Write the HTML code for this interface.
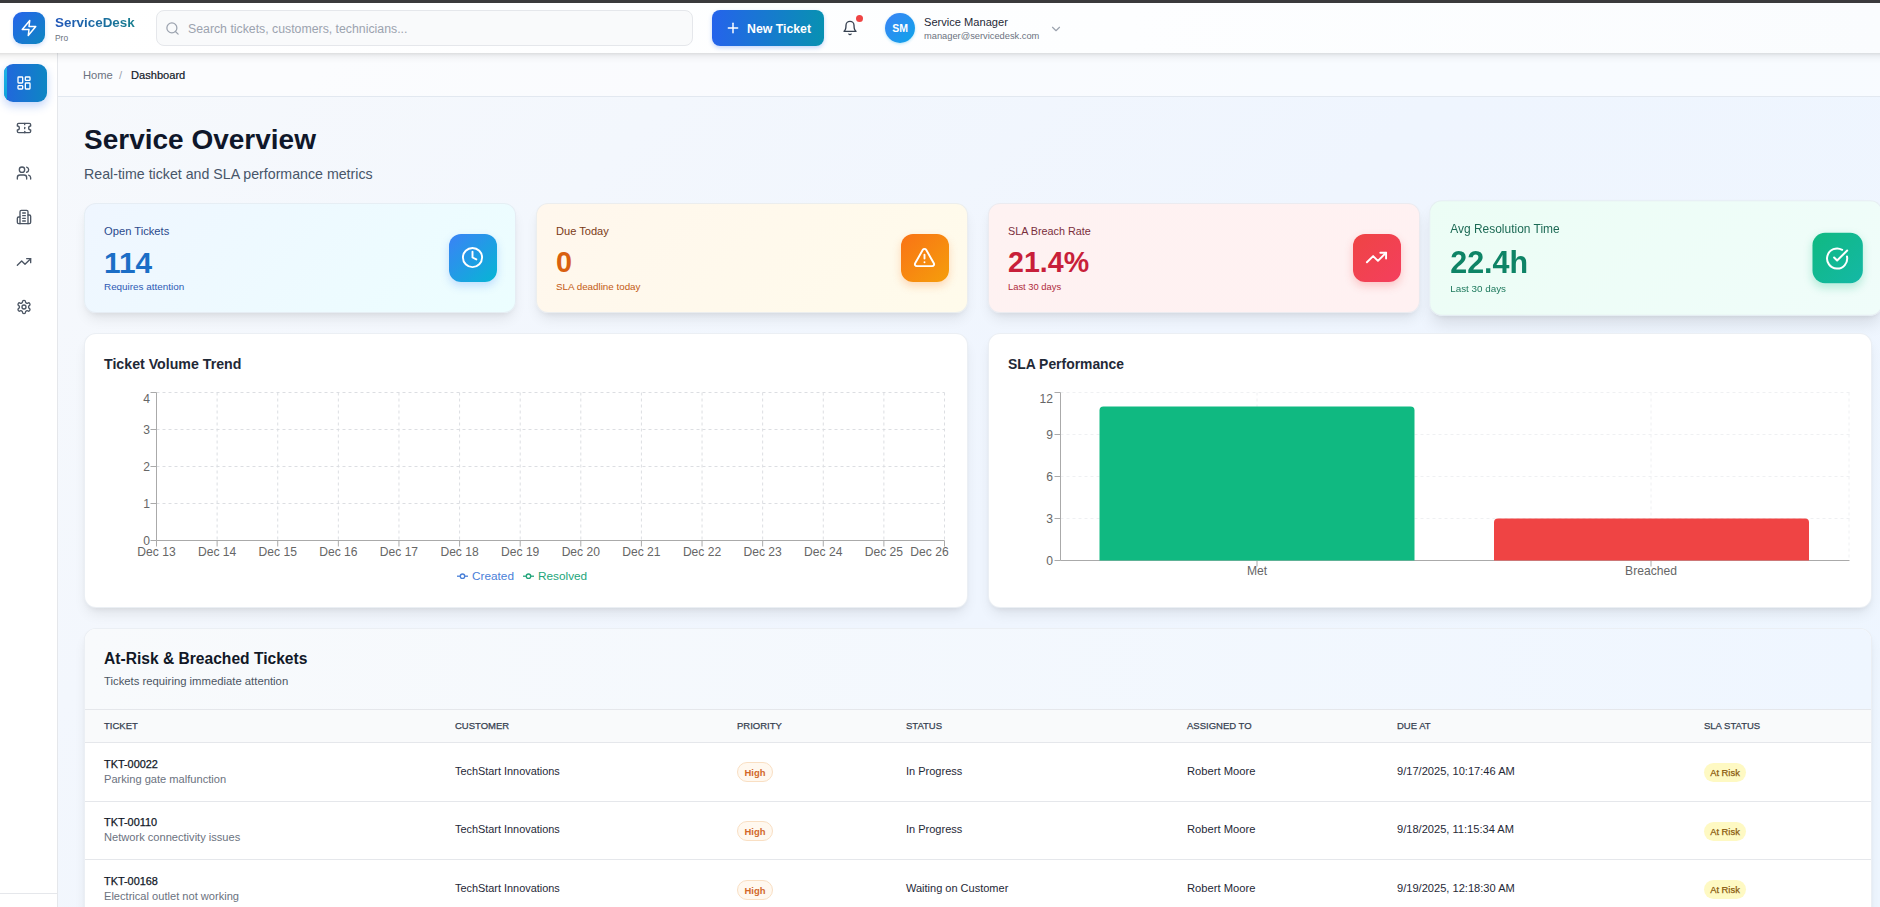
<!DOCTYPE html>
<html><head><meta charset="utf-8">
<style>
*{box-sizing:border-box;margin:0;padding:0}
html,body{width:1880px;height:907px;overflow:hidden}
body{font-family:"Liberation Sans",sans-serif;position:relative;background:linear-gradient(135deg,#f7f9fc 0%,#eff5fe 55%,#eef6ff 100%);color:#1f2937}
.abs{position:absolute}
.t{position:absolute;white-space:nowrap;line-height:1}
svg{display:block}
#topbar{left:0;top:0;width:1880px;height:3px;background:#3a3a3c;z-index:10}
#header{left:0;top:3px;width:1880px;height:50px;background:linear-gradient(90deg,#ffffff 0%,#fdfeff 60%,#fafcfe 100%);z-index:5}
#sidebar{left:0;top:53px;width:58px;height:854px;background:#fff;border-right:1px solid #e5e7eb;z-index:3}
#crumb{left:58px;top:53px;width:1822px;height:44px;background:rgba(255,255,255,.55);border-bottom:1px solid #e2e8f0}
.card{position:absolute;border-radius:12px;box-shadow:0 8px 14px -3px rgba(0,0,0,.09),0 3px 6px -3px rgba(0,0,0,.08);border:1px solid rgba(226,232,240,.7)}
.ibox{position:absolute;width:48px;height:48px;border-radius:12px;display:flex;align-items:center;justify-content:center}
</style></head>
<body>
<div id="topbar" class="abs"></div>
<div class="abs" style="left:-20px;top:3px;width:1920px;height:50px;box-shadow:0 3px 8px rgba(0,0,0,.09),0 1px 3px rgba(0,0,0,.08);z-index:4;background:#fff"></div>
<div id="header" class="abs">
  <div class="abs" style="left:13px;top:9px;width:32px;height:32px;border-radius:9px;background:linear-gradient(135deg,#2563eb,#0e87c0);box-shadow:0 2px 4px rgba(37,99,235,.2);display:flex;align-items:center;justify-content:center">
    <svg width="18" height="18" viewBox="0 0 24 24" fill="none" stroke="#fff" stroke-width="2" stroke-linecap="round" stroke-linejoin="round"><polygon points="13 2 3 14 12 14 11 22 21 10 12 10 13 2"/></svg>
  </div>
  <div class="t" style="left:55px;top:13px;font-size:13.4px;font-weight:700;background:linear-gradient(90deg,#1f55b8,#167d8e);-webkit-background-clip:text;background-clip:text;color:transparent">ServiceDesk</div>
  <div class="t" style="left:55px;top:31px;font-size:8.4px;color:#6b7280">Pro</div>
  <div class="abs" style="left:156px;top:7px;width:537px;height:36px;border:1px solid #e5e7eb;border-radius:8px;background:#f9fafb"></div>
  <svg class="abs" style="left:165px;top:18px" width="15" height="15" viewBox="0 0 24 24" fill="none" stroke="#9ca3af" stroke-width="2" stroke-linecap="round" stroke-linejoin="round"><circle cx="11" cy="11" r="8"/><path d="m21 21-4.3-4.3"/></svg>
  <div class="t" style="left:188px;top:20px;font-size:12.3px;color:#9ca3af">Search tickets, customers, technicians...</div>
  <div class="abs" style="left:712px;top:7px;width:112px;height:36px;border-radius:8px;background:linear-gradient(90deg,#2563eb,#0891b2);box-shadow:0 2px 4px rgba(37,99,235,.25)"></div>
  <svg class="abs" style="left:725px;top:17px" width="16" height="16" viewBox="0 0 24 24" fill="none" stroke="#fff" stroke-width="2.2" stroke-linecap="round"><path d="M5 12h14"/><path d="M12 5v14"/></svg>
  <div class="t" style="left:747px;top:20px;font-size:12.3px;font-weight:700;color:#fff">New Ticket</div>
  <svg class="abs" style="left:841.7px;top:17px" width="16" height="16" viewBox="0 0 24 24" fill="none" stroke="#374151" stroke-width="2" stroke-linecap="round" stroke-linejoin="round"><path d="M6 8a6 6 0 0 1 12 0c0 7 3 9 3 9H3s3-2 3-9"/><path d="M10.3 21a1.94 1.94 0 0 0 3.4 0"/></svg>
  <div class="abs" style="left:856px;top:12px;width:7px;height:7px;border-radius:50%;background:#ef4444"></div>
  <div class="abs" style="left:885px;top:10px;width:30px;height:30px;border-radius:50%;background:linear-gradient(135deg,#3b82f6,#0ea5e9);box-shadow:0 1px 3px rgba(14,165,233,.3);display:flex;align-items:center;justify-content:center;color:#fff;font-weight:700;font-size:10.5px">SM</div>
  <div class="t" style="left:924px;top:14px;font-size:11.1px;color:#1f2937">Service Manager</div>
  <div class="t" style="left:924px;top:29px;font-size:9.3px;color:#6b7280">manager@servicedesk.com</div>
  <svg class="abs" style="left:1049px;top:19px" width="14" height="14" viewBox="0 0 24 24" fill="none" stroke="#9ca3af" stroke-width="2" stroke-linecap="round" stroke-linejoin="round"><path d="m6 9 6 6 6-6"/></svg>
</div>

<div id="sidebar" class="abs">
  <div class="abs" style="left:0;top:840px;width:57px;height:1px;background:#e5e7eb"></div>
  <div class="abs" style="left:4px;top:11px;width:43px;height:38px;border-radius:9px;background:linear-gradient(90deg,#2266dd,#0d86c4);box-shadow:0 4px 10px rgba(37,99,235,.28);overflow:hidden">
    <div class="abs" style="left:0;top:0;width:3px;height:38px;background:linear-gradient(180deg,#22b5e8,#0aa0d8)"></div>
  </div>
  <svg class="abs" style="left:16px;top:22px" width="16" height="16" viewBox="0 0 24 24" fill="none" stroke="#fff" stroke-width="2" stroke-linecap="round" stroke-linejoin="round"><rect width="7" height="9" x="3" y="3" rx="1"/><rect width="7" height="5" x="14" y="3" rx="1"/><rect width="7" height="9" x="14" y="12" rx="1"/><rect width="7" height="5" x="3" y="16" rx="1"/></svg>
  <svg class="abs" style="left:16px;top:67.3px" width="16" height="16" viewBox="0 0 24 24" fill="none" stroke="#4b5563" stroke-width="2" stroke-linecap="round" stroke-linejoin="round"><path d="M2 9a3 3 0 0 1 0 6v2a2 2 0 0 0 2 2h16a2 2 0 0 0 2-2v-2a3 3 0 0 1 0-6V7a2 2 0 0 0-2-2H4a2 2 0 0 0-2 2Z"/><path d="M13 5v2"/><path d="M13 17v2"/><path d="M13 11v2"/></svg>
  <svg class="abs" style="left:16px;top:112.4px" width="16" height="16" viewBox="0 0 24 24" fill="none" stroke="#4b5563" stroke-width="2" stroke-linecap="round" stroke-linejoin="round"><path d="M16 21v-2a4 4 0 0 0-4-4H6a4 4 0 0 0-4 4v2"/><circle cx="9" cy="7" r="4"/><path d="M22 21v-2a4 4 0 0 0-3-3.87"/><path d="M16 3.13a4 4 0 0 1 0 7.75"/></svg>
  <svg class="abs" style="left:16px;top:155.6px" width="16" height="16" viewBox="0 0 24 24" fill="none" stroke="#4b5563" stroke-width="2" stroke-linecap="round" stroke-linejoin="round"><path d="M6 22V4a2 2 0 0 1 2-2h8a2 2 0 0 1 2 2v18Z"/><path d="M6 12H4a2 2 0 0 0-2 2v6a2 2 0 0 0 2 2h2"/><path d="M18 9h2a2 2 0 0 1 2 2v9a2 2 0 0 1-2 2h-2"/><path d="M10 6h4"/><path d="M10 10h4"/><path d="M10 14h4"/><path d="M10 18h4"/></svg>
  <svg class="abs" style="left:16px;top:201px" width="16" height="16" viewBox="0 0 24 24" fill="none" stroke="#4b5563" stroke-width="2" stroke-linecap="round" stroke-linejoin="round"><polyline points="22 7 13.5 15.5 8.5 10.5 2 17"/><polyline points="16 7 22 7 22 13"/></svg>
  <svg class="abs" style="left:16px;top:245.8px" width="16" height="16" viewBox="0 0 24 24" fill="none" stroke="#4b5563" stroke-width="2" stroke-linecap="round" stroke-linejoin="round"><path d="M12.22 2h-.44a2 2 0 0 0-2 2v.18a2 2 0 0 1-1 1.73l-.43.25a2 2 0 0 1-2 0l-.15-.08a2 2 0 0 0-2.73.73l-.22.38a2 2 0 0 0 .73 2.73l.15.1a2 2 0 0 1 1 1.72v.51a2 2 0 0 1-1 1.74l-.15.09a2 2 0 0 0-.73 2.73l.22.38a2 2 0 0 0 2.73.73l.15-.08a2 2 0 0 1 2 0l.43.25a2 2 0 0 1 1 1.73V20a2 2 0 0 0 2 2h.44a2 2 0 0 0 2-2v-.18a2 2 0 0 1 1-1.73l.43-.25a2 2 0 0 1 2 0l.15.08a2 2 0 0 0 2.73-.73l.22-.39a2 2 0 0 0-.73-2.73l-.15-.08a2 2 0 0 1-1-1.74v-.5a2 2 0 0 1 1-1.74l.15-.09a2 2 0 0 0 .73-2.73l-.22-.38a2 2 0 0 0-2.73-.73l-.15.08a2 2 0 0 1-2 0l-.43-.25a2 2 0 0 1-1-1.73V4a2 2 0 0 0-2-2z"/><circle cx="12" cy="12" r="3"/></svg>
</div>
<div id="crumb" class="abs">
  <div class="t" style="left:25px;top:16.8px;font-size:11.2px;color:#6b7280">Home</div>
  <div class="t" style="left:61px;top:16.8px;font-size:11.2px;color:#9ca3af">/</div>
  <div class="t" style="left:73px;top:16.8px;font-size:11.1px;color:#111827;-webkit-text-stroke:.2px #111827">Dashboard</div>
</div>

<div class="t" style="left:84px;top:126px;font-size:28px;font-weight:700;color:#0f172a">Service Overview</div>
<div class="t" style="left:84px;top:167px;font-size:14.2px;color:#475569">Real-time ticket and SLA performance metrics</div>


<!-- stat cards -->
<div class="card" style="left:84px;top:202.5px;width:432px;height:110px;background:linear-gradient(135deg,#eff6ff,#ecfeff)">
  <div class="t" style="left:19px;top:22px;font-size:11.2px;color:#2b4a8c">Open Tickets</div>
  <div class="t" style="left:19px;top:44px;font-size:29.8px;font-weight:700;color:#1b6ec6">114</div>
  <div class="t" style="left:19px;top:78px;font-size:9.9px;color:#2d5ab4">Requires attention</div>
  <div class="ibox" style="left:363.5px;top:30px;background:linear-gradient(135deg,#3b82f6,#06b6d4);box-shadow:0 4px 8px rgba(59,130,246,.25)">
    <svg width="23" height="23" viewBox="0 0 24 24" fill="none" stroke="#fff" stroke-width="2" stroke-linecap="round" stroke-linejoin="round"><circle cx="12" cy="12" r="10"/><polyline points="12 6 12 12 16 14"/></svg>
  </div>
</div>
<div class="card" style="left:536px;top:202.5px;width:432px;height:110px;background:linear-gradient(135deg,#fff7ed,#fffbeb)">
  <div class="t" style="left:19px;top:22px;font-size:11.1px;color:#7a3a16">Due Today</div>
  <div class="t" style="left:19px;top:44px;font-size:28.8px;font-weight:700;color:#d9600f">0</div>
  <div class="t" style="left:19px;top:78px;font-size:9.8px;color:#c35a14">SLA deadline today</div>
  <div class="ibox" style="left:363.5px;top:30px;background:linear-gradient(135deg,#f97316,#f59e0b);box-shadow:0 4px 8px rgba(249,115,22,.25)">
    <svg width="23" height="23" viewBox="0 0 24 24" fill="none" stroke="#fff" stroke-width="2" stroke-linecap="round" stroke-linejoin="round"><path d="m21.73 18-8-14a2 2 0 0 0-3.48 0l-8 14A2 2 0 0 0 4 21h16a2 2 0 0 0 1.73-3"/><path d="M12 9v4"/><path d="M12 17h.01"/></svg>
  </div>
</div>
<div class="card" style="left:988px;top:202.5px;width:432px;height:110px;background:linear-gradient(135deg,#fef2f2,#fff1f2)">
  <div class="t" style="left:19px;top:22px;font-size:10.8px;color:#7a2e3c">SLA Breach Rate</div>
  <div class="t" style="left:19px;top:44px;font-size:28.6px;font-weight:700;color:#c81f3a">21.4%</div>
  <div class="t" style="left:19px;top:78px;font-size:9.4px;color:#b02a3c">Last 30 days</div>
  <div class="ibox" style="left:363.5px;top:30px;background:linear-gradient(135deg,#ef4444,#f43f5e);box-shadow:0 4px 8px rgba(239,68,68,.25)">
    <svg width="23" height="23" viewBox="0 0 24 24" fill="none" stroke="#fff" stroke-width="2" stroke-linecap="round" stroke-linejoin="round"><polyline points="22 7 13.5 15.5 8.5 10.5 2 17"/><polyline points="16 7 22 7 22 13"/></svg>
  </div>
</div>
<div class="card" style="left:1440px;top:202.5px;width:432px;height:110px;background:linear-gradient(135deg,#ecfdf5,#f0fdfa);transform:scale(1.05);box-shadow:0 10px 15px -3px rgba(0,0,0,.1),0 4px 6px -4px rgba(0,0,0,.1)">
  <div class="t" style="left:19px;top:21px;font-size:11.4px;color:#1d6a55">Avg Resolution Time</div>
  <div class="t" style="left:19px;top:44px;font-size:29px;font-weight:700;color:#0e8466">22.4h</div>
  <div class="t" style="left:19px;top:78px;font-size:9.4px;color:#1f7a5e">Last 30 days</div>
  <div class="ibox" style="left:363.5px;top:30px;background:linear-gradient(135deg,#10b981,#14b8a6);box-shadow:0 4px 8px rgba(16,185,129,.25)">
    <svg width="23" height="23" viewBox="0 0 24 24" fill="none" stroke="#fff" stroke-width="2" stroke-linecap="round" stroke-linejoin="round"><path d="M21.801 10A10 10 0 1 1 17 3.335"/><path d="m9 11 3 3L22 4"/></svg>
  </div>
</div>



<!-- chart cards -->
<div class="card" style="left:84px;top:332.5px;width:884px;height:275px;background:#fff"></div>
<div class="card" style="left:988px;top:332.5px;width:884px;height:275px;background:#fff"></div>
<div class="t" style="left:104px;top:357px;font-size:14.2px;font-weight:700;color:#1f2937">Ticket Volume Trend</div>
<div class="t" style="left:1008px;top:357.5px;font-size:13.9px;font-weight:700;color:#1f2937">SLA Performance</div>

<svg class="abs" style="left:0;top:0" width="1880" height="907" font-family="Liberation Sans" >
<g stroke="#dcdee2" stroke-dasharray="3 3" stroke-width="1"><line x1="156.5" y1="392.5" x2="944.5" y2="392.5"/><line x1="156.5" y1="429.5" x2="944.5" y2="429.5"/><line x1="156.5" y1="466.5" x2="944.5" y2="466.5"/><line x1="156.5" y1="503.5" x2="944.5" y2="503.5"/><line x1="217.12" y1="392.5" x2="217.12" y2="540.5"/><line x1="277.73" y1="392.5" x2="277.73" y2="540.5"/><line x1="338.35" y1="392.5" x2="338.35" y2="540.5"/><line x1="398.96" y1="392.5" x2="398.96" y2="540.5"/><line x1="459.58" y1="392.5" x2="459.58" y2="540.5"/><line x1="520.19" y1="392.5" x2="520.19" y2="540.5"/><line x1="580.81" y1="392.5" x2="580.81" y2="540.5"/><line x1="641.42" y1="392.5" x2="641.42" y2="540.5"/><line x1="702.04" y1="392.5" x2="702.04" y2="540.5"/><line x1="762.65" y1="392.5" x2="762.65" y2="540.5"/><line x1="823.27" y1="392.5" x2="823.27" y2="540.5"/><line x1="883.88" y1="392.5" x2="883.88" y2="540.5"/><line x1="944.50" y1="392.5" x2="944.50" y2="540.5"/></g>
<g stroke="#aaa" stroke-width="1"><line x1="156.5" y1="392.5" x2="156.5" y2="540.5"/><line x1="156.5" y1="540.5" x2="944.5" y2="540.5"/>
<line x1="150.5" y1="392.5" x2="156.5" y2="392.5"/>
<line x1="150.5" y1="429.5" x2="156.5" y2="429.5"/>
<line x1="150.5" y1="466.5" x2="156.5" y2="466.5"/>
<line x1="150.5" y1="503.5" x2="156.5" y2="503.5"/>
<line x1="150.5" y1="540.5" x2="156.5" y2="540.5"/>
<line x1="156.50" y1="540.5" x2="156.50" y2="546.5"/>
<line x1="217.12" y1="540.5" x2="217.12" y2="546.5"/>
<line x1="277.73" y1="540.5" x2="277.73" y2="546.5"/>
<line x1="338.35" y1="540.5" x2="338.35" y2="546.5"/>
<line x1="398.96" y1="540.5" x2="398.96" y2="546.5"/>
<line x1="459.58" y1="540.5" x2="459.58" y2="546.5"/>
<line x1="520.19" y1="540.5" x2="520.19" y2="546.5"/>
<line x1="580.81" y1="540.5" x2="580.81" y2="546.5"/>
<line x1="641.42" y1="540.5" x2="641.42" y2="546.5"/>
<line x1="702.04" y1="540.5" x2="702.04" y2="546.5"/>
<line x1="762.65" y1="540.5" x2="762.65" y2="546.5"/>
<line x1="823.27" y1="540.5" x2="823.27" y2="546.5"/>
<line x1="883.88" y1="540.5" x2="883.88" y2="546.5"/>
<line x1="944.50" y1="540.5" x2="944.50" y2="546.5"/>
</g>
<g fill="#666" font-size="12.1" text-anchor="end">
<text x="150.0" y="402.8">4</text>
<text x="150.0" y="433.8">3</text>
<text x="150.0" y="470.8">2</text>
<text x="150.0" y="507.8">1</text>
<text x="150.0" y="544.8">0</text>
</g><g fill="#666" font-size="12.1" text-anchor="middle">
<text x="156.50" y="555.8">Dec 13</text>
<text x="217.12" y="555.8">Dec 14</text>
<text x="277.73" y="555.8">Dec 15</text>
<text x="338.35" y="555.8">Dec 16</text>
<text x="398.96" y="555.8">Dec 17</text>
<text x="459.58" y="555.8">Dec 18</text>
<text x="520.19" y="555.8">Dec 19</text>
<text x="580.81" y="555.8">Dec 20</text>
<text x="641.42" y="555.8">Dec 21</text>
<text x="702.04" y="555.8">Dec 22</text>
<text x="762.65" y="555.8">Dec 23</text>
<text x="823.27" y="555.8">Dec 24</text>
<text x="883.88" y="555.8">Dec 25</text>
<text x="929.50" y="555.8">Dec 26</text>
</g>
<g stroke-width="1.3" fill="none"><g stroke="#4a80d8"><line x1="457" y1="576.2" x2="468" y2="576.2"/><circle cx="462.5" cy="576.2" r="2.2" fill="#fff"/></g><g stroke="#22a57a"><line x1="523" y1="576.2" x2="534" y2="576.2"/><circle cx="528.5" cy="576.2" r="2.2" fill="#fff"/></g></g>
<text x="472" y="580" font-size="11.8" fill="#4a80d8">Created</text><text x="538" y="580" font-size="11.8" fill="#22a57a">Resolved</text>
<g stroke="#eff0f2" stroke-dasharray="3 3" stroke-width="1"><line x1="1060.5" y1="392.50" x2="1849.5" y2="392.50"/><line x1="1060.5" y1="434.50" x2="1849.5" y2="434.50"/><line x1="1060.5" y1="476.50" x2="1849.5" y2="476.50"/><line x1="1060.5" y1="518.50" x2="1849.5" y2="518.50"/><line x1="1257" y1="392.5" x2="1257" y2="560.5"/><line x1="1651" y1="392.5" x2="1651" y2="560.5"/><line x1="1849" y1="392.5" x2="1849" y2="560.5"/></g>
<g stroke="#aaa" stroke-width="1"><line x1="1060.5" y1="392.5" x2="1060.5" y2="560.5"/><line x1="1060.5" y1="560.5" x2="1849.5" y2="560.5"/>
<line x1="1054.5" y1="392.50" x2="1060.5" y2="392.50"/>
<line x1="1054.5" y1="434.50" x2="1060.5" y2="434.50"/>
<line x1="1054.5" y1="476.50" x2="1060.5" y2="476.50"/>
<line x1="1054.5" y1="518.50" x2="1060.5" y2="518.50"/>
<line x1="1054.5" y1="560.50" x2="1060.5" y2="560.50"/>
<line x1="1257" y1="560.5" x2="1257" y2="566.5"/>
<line x1="1651" y1="560.5" x2="1651" y2="566.5"/>
</g><g fill="#666" font-size="12.1" text-anchor="end">
<text x="1053.0" y="402.8">12</text>
<text x="1053.0" y="438.8">9</text>
<text x="1053.0" y="480.8">6</text>
<text x="1053.0" y="522.8">3</text>
<text x="1053.0" y="564.8">0</text>
</g><g fill="#666" font-size="12.1" text-anchor="middle"><text x="1257" y="574.8">Met</text><text x="1651" y="574.8">Breached</text></g>
<path d="M1099.5,560.5 V410.50 Q1099.5,406.50 1103.5,406.50 H1410.5 Q1414.5,406.50 1414.5,410.50 V560.5 Z" fill="#10b981"/>
<path d="M1494,560.5 V522.50 Q1494,518.50 1498,518.50 H1805 Q1809,518.50 1809,522.50 V560.5 Z" fill="#ef4444"/>
</svg>

<!-- table -->
<div class="card" style="left:84px;top:627.5px;width:1788px;height:320px;background:#fff;overflow:hidden">
  <div class="abs" style="left:0;top:0;width:1788px;height:80px;background:linear-gradient(90deg,#f8fafc,#eff6ff)"></div>
  <div class="abs" style="left:0;top:80px;width:1788px;height:34px;background:#f9fafb;border-top:1px solid #e5e7eb;border-bottom:1px solid #e5e7eb"></div>
  <div class="abs" style="left:0;top:172px;width:1788px;height:1px;background:#e5e7eb"></div>
  <div class="abs" style="left:0;top:230.5px;width:1788px;height:1px;background:#e5e7eb"></div>
</div>
<div class="t" style="left:104px;top:651px;font-size:15.6px;font-weight:700;color:#111827">At-Risk &amp; Breached Tickets</div>
<div class="t" style="left:104px;top:676px;font-size:11.3px;color:#4b5563">Tickets requiring immediate attention</div>

<div class="t" style="left:104px;top:720.9px;font-size:9.5px;color:#374151;-webkit-text-stroke:.25px #374151">TICKET</div>
<div class="t" style="left:455px;top:720.9px;font-size:9.5px;color:#374151;-webkit-text-stroke:.25px #374151">CUSTOMER</div>
<div class="t" style="left:737px;top:720.9px;font-size:9.5px;color:#374151;-webkit-text-stroke:.25px #374151">PRIORITY</div>
<div class="t" style="left:906px;top:720.9px;font-size:9.5px;color:#374151;-webkit-text-stroke:.25px #374151">STATUS</div>
<div class="t" style="left:1187px;top:720.9px;font-size:9.5px;color:#374151;-webkit-text-stroke:.25px #374151">ASSIGNED TO</div>
<div class="t" style="left:1397px;top:720.9px;font-size:9.5px;color:#374151;-webkit-text-stroke:.25px #374151">DUE AT</div>
<div class="t" style="left:1704px;top:720.9px;font-size:9.5px;color:#374151;-webkit-text-stroke:.25px #374151">SLA STATUS</div>
<div class="t" style="left:104px;top:758.5px;font-size:10.9px;color:#111827;-webkit-text-stroke:.25px #111827">TKT-00022</div>
<div class="t" style="left:104px;top:774px;font-size:11.1px;color:#6b7280">Parking gate malfunction</div>
<div class="t" style="left:455px;top:766px;font-size:10.9px;color:#1f2937">TechStart Innovations</div>
<div class="abs" style="left:737px;top:762px;width:36px;height:20px;border-radius:10px;background:#fff8ef;border:1px solid #f9dfc3;color:#d2682a;font-size:9.45px;font-weight:700;line-height:19.5px;text-align:center">High</div>
<div class="t" style="left:906px;top:766px;font-size:11px;color:#1f2937">In Progress</div>
<div class="t" style="left:1187px;top:766px;font-size:11.2px;color:#1f2937">Robert Moore</div>
<div class="t" style="left:1397px;top:766px;font-size:11.1px;color:#1f2937">9/17/2025, 10:17:46 AM</div>
<div class="abs" style="left:1704px;top:762.5px;width:42px;height:19px;border-radius:10px;background:#fef9c3;color:#8a5a0e;font-size:9.4px;line-height:19px;text-align:center;-webkit-text-stroke:.25px #8a5a0e">At Risk</div>
<div class="t" style="left:104px;top:816.5px;font-size:10.9px;color:#111827;-webkit-text-stroke:.25px #111827">TKT-00110</div>
<div class="t" style="left:104px;top:832px;font-size:11.1px;color:#6b7280">Network connectivity issues</div>
<div class="t" style="left:455px;top:824px;font-size:10.9px;color:#1f2937">TechStart Innovations</div>
<div class="abs" style="left:737px;top:821px;width:36px;height:20px;border-radius:10px;background:#fff8ef;border:1px solid #f9dfc3;color:#d2682a;font-size:9.45px;font-weight:700;line-height:19.5px;text-align:center">High</div>
<div class="t" style="left:906px;top:824px;font-size:11px;color:#1f2937">In Progress</div>
<div class="t" style="left:1187px;top:824px;font-size:11.2px;color:#1f2937">Robert Moore</div>
<div class="t" style="left:1397px;top:824px;font-size:11.1px;color:#1f2937">9/18/2025, 11:15:34 AM</div>
<div class="abs" style="left:1704px;top:821.5px;width:42px;height:19px;border-radius:10px;background:#fef9c3;color:#8a5a0e;font-size:9.4px;line-height:19px;text-align:center;-webkit-text-stroke:.25px #8a5a0e">At Risk</div>
<div class="t" style="left:104px;top:875.5px;font-size:10.9px;color:#111827;-webkit-text-stroke:.25px #111827">TKT-00168</div>
<div class="t" style="left:104px;top:891px;font-size:11.1px;color:#6b7280">Electrical outlet not working</div>
<div class="t" style="left:455px;top:882.5px;font-size:10.9px;color:#1f2937">TechStart Innovations</div>
<div class="abs" style="left:737px;top:879.5px;width:36px;height:20px;border-radius:10px;background:#fff8ef;border:1px solid #f9dfc3;color:#d2682a;font-size:9.45px;font-weight:700;line-height:19.5px;text-align:center">High</div>
<div class="t" style="left:906px;top:882.5px;font-size:11px;color:#1f2937">Waiting on Customer</div>
<div class="t" style="left:1187px;top:882.5px;font-size:11.2px;color:#1f2937">Robert Moore</div>
<div class="t" style="left:1397px;top:882.5px;font-size:11.1px;color:#1f2937">9/19/2025, 12:18:30 AM</div>
<div class="abs" style="left:1704px;top:880px;width:42px;height:19px;border-radius:10px;background:#fef9c3;color:#8a5a0e;font-size:9.4px;line-height:19px;text-align:center;-webkit-text-stroke:.25px #8a5a0e">At Risk</div>

</body></html>
